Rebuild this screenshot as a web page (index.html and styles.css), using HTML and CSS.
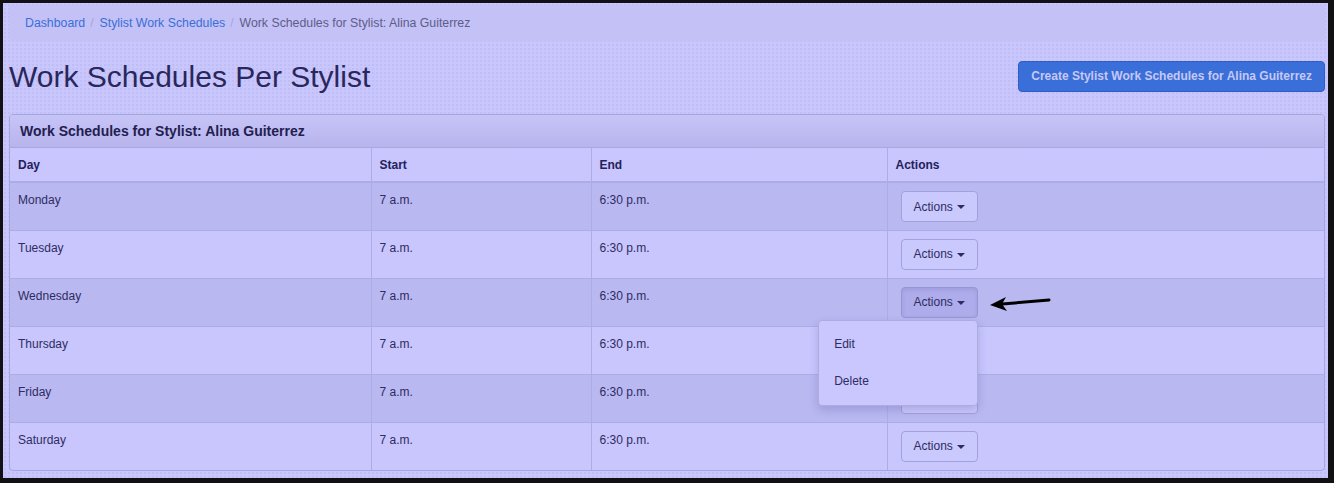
FILE: index.html
```html
<!DOCTYPE html>
<html lang="en">
<head>
    <meta charset="UTF-8">
    <meta name="viewport" content="width=device-width, initial-scale=1.0">
    <title>Work Schedules Per Stylist</title>
    <link rel="stylesheet" href="styles.css">
</head>
<body>
    <div class="page">
        <ol class="breadcrumb">
            <li><a href="#">Dashboard</a></li>
            <li><a href="#">Stylist Work Schedules</a></li>
            <li class="active">Work Schedules for Stylist: Alina Guiterrez</li>
        </ol>

        <div class="page-head">
            <h1>Work Schedules Per Stylist</h1>
            <a href="#" class="btn-primary">Create Stylist Work Schedules for Alina Guiterrez</a>
        </div>

        <div class="panel">
            <div class="panel-heading">Work Schedules for Stylist: Alina Guiterrez</div>
            <table class="schedule-table">
                <colgroup>
                    <col class="col-day">
                    <col class="col-start">
                    <col class="col-end">
                    <col class="col-actions">
                </colgroup>
                <thead>
                    <tr>
                        <th>Day</th>
                        <th>Start</th>
                        <th>End</th>
                        <th>Actions</th>
                    </tr>
                </thead>
                <tbody>
                    <tr>
                        <td>Monday</td><td>7 a.m.</td><td>6:30 p.m.</td>
                        <td><div class="btn-group"><button class="btn-default">Actions <span class="caret"></span></button></div></td>
                    </tr>
                    <tr>
                        <td>Tuesday</td><td>7 a.m.</td><td>6:30 p.m.</td>
                        <td><div class="btn-group"><button class="btn-default">Actions <span class="caret"></span></button></div></td>
                    </tr>
                    <tr>
                        <td>Wednesday</td><td>7 a.m.</td><td>6:30 p.m.</td>
                        <td>
                            <div class="btn-group open">
                                <button class="btn-default active">Actions <span class="caret"></span></button>
                                <svg class="pointer" width="64" height="20" viewBox="0 0 64 20">
                                    <path d="M61 8 L14 12" stroke="#000" stroke-width="3" stroke-linecap="round" fill="none"/>
                                    <path d="M2 13 L18 5 L14 12 L19 19 Z" fill="#000"/>
                                </svg>
                                <ul class="dropdown-menu">
                                    <li><a href="#">Edit</a></li>
                                    <li><a href="#">Delete</a></li>
                                </ul>
                            </div>
                        </td>
                    </tr>
                    <tr>
                        <td>Thursday</td><td>7 a.m.</td><td>6:30 p.m.</td>
                        <td><div class="btn-group"><button class="btn-default">Actions <span class="caret"></span></button></div></td>
                    </tr>
                    <tr>
                        <td>Friday</td><td>7 a.m.</td><td>6:30 p.m.</td>
                        <td><div class="btn-group"><button class="btn-default">Actions <span class="caret"></span></button></div></td>
                    </tr>
                    <tr>
                        <td>Saturday</td><td>7 a.m.</td><td>6:30 p.m.</td>
                        <td><div class="btn-group"><button class="btn-default">Actions <span class="caret"></span></button></div></td>
                    </tr>
                </tbody>
            </table>
        </div>
    </div>
</body>
</html>
```

FILE: styles.css
```css
html, body {
    margin: 0;
    padding: 0;
    height: 100%;
    background-color: #111015;
    font-family: "Liberation Sans", Arial, sans-serif;
    color: #2c2a5e;
}

.page {
    box-sizing: border-box;
    height: 475px;
    margin: 3px 6px 0 3px;
    padding: 2px 3px 0 6px;
    background-color: #c8c6fc;
    background-image: radial-gradient(circle, #bbb9f0 0.6px, transparent 0.9px);
    background-size: 4px 4px;
    overflow: hidden;
}

.breadcrumb {
    list-style: none;
    margin: 0;
    padding: 0 16px;
    height: 36px;
    display: flex;
    align-items: center;
    background-color: #c3c1f6;
    border-radius: 4px;
    font-size: 12.3px;
}

.breadcrumb li + li::before {
    content: "/";
    color: #a8a6d8;
    padding: 0 6px 0 5px;
}

.breadcrumb a {
    color: #3a6fd6;
    text-decoration: none;
}

.breadcrumb .active {
    color: #5e5c88;
}

.page-head {
    display: flex;
    align-items: center;
    justify-content: space-between;
    margin-top: 20px;
    height: 31px;
}

h1 {
    margin: 0;
    font-size: 30px;
    font-weight: normal;
    color: #29275c;
}

.btn-primary {
    display: inline-block;
    box-sizing: border-box;
    height: 31px;
    line-height: 29px;
    padding: 0 12px;
    background-color: #3a6ed8;
    border: 1px solid #2f5fc4;
    border-radius: 4px;
    color: #c6c8f6;
    font-size: 12px;
    font-weight: bold;
    text-decoration: none;
}

.panel {
    margin-top: 22px;
    border: 1px solid #a7a5df;
    border-radius: 4px;
    background-color: #c8c6fd;
    overflow: hidden;
}

.panel-heading {
    height: 32px;
    line-height: 32px;
    padding: 0 10px;
    background: linear-gradient(#c6c4f7, #b6b4ec);
    border-bottom: 1px solid #a9a7e0;
    font-size: 14px;
    font-weight: bold;
    color: #232050;
}

.schedule-table {
    width: 100%;
    border-collapse: collapse;
    table-layout: fixed;
    font-size: 12px;
}

.col-day { width: 361px; }
.col-start { width: 220px; }
.col-end { width: 296px; }

.schedule-table th,
.schedule-table td {
    border-left: 1px solid #aeace6;
    border-top: 1px solid #aeace6;
    text-align: left;
    vertical-align: top;
    padding: 10px 8px 0 8px;
    color: #2e2c62;
}

.schedule-table th:first-child,
.schedule-table td:first-child {
    border-left: none;
}

.schedule-table thead tr {
    height: 34px;
}

.schedule-table th {
    border-top: none;
    border-bottom: 2px solid #aeace6;
    vertical-align: middle;
    padding-top: 0;
    font-weight: bold;
    color: #24215a;
}

.schedule-table tbody tr {
    height: 48px;
}

.schedule-table tbody tr:first-child td {
    border-top: none;
}

.schedule-table tbody tr:nth-child(odd) {
    background-color: #b9b8f1;
}

.schedule-table td:last-child {
    padding: 8px 13px 0 13px;
}

.btn-group {
    position: relative;
    display: inline-block;
}

.btn-default {
    box-sizing: border-box;
    height: 31px;
    padding: 0 12px;
    white-space: nowrap;
    background-color: #cac9fd;
    border: 1px solid #a3a1db;
    border-radius: 4px;
    font-family: "Liberation Sans", Arial, sans-serif;
    font-size: 12px;
    color: #2e2c62;
}

.btn-default.active {
    background-color: #aeacea;
    border-color: #9896d2;
    box-shadow: inset 0 2px 4px rgba(60, 50, 130, 0.12);
}

.caret {
    display: inline-block;
    width: 0;
    height: 0;
    margin-left: 1px;
    vertical-align: middle;
    border-top: 4px solid #2e2c62;
    border-left: 4px solid transparent;
    border-right: 4px solid transparent;
}

.pointer {
    position: absolute;
    left: 87px;
    top: 5px;
}

.dropdown-menu {
    position: absolute;
    top: 33px;
    right: 0;
    z-index: 2;
    box-sizing: border-box;
    width: 160px;
    margin: 0;
    padding: 5px 0;
    list-style: none;
    background-color: #c9c7fd;
    border: 1px solid #aeacde;
    border-radius: 4px;
    box-shadow: 0 4px 10px rgba(40, 30, 110, 0.18);
}

.dropdown-menu a {
    display: block;
    height: 37px;
    line-height: 36px;
    padding: 0 15px;
    color: #2e2c62;
    font-size: 12px;
    text-decoration: none;
}
```
